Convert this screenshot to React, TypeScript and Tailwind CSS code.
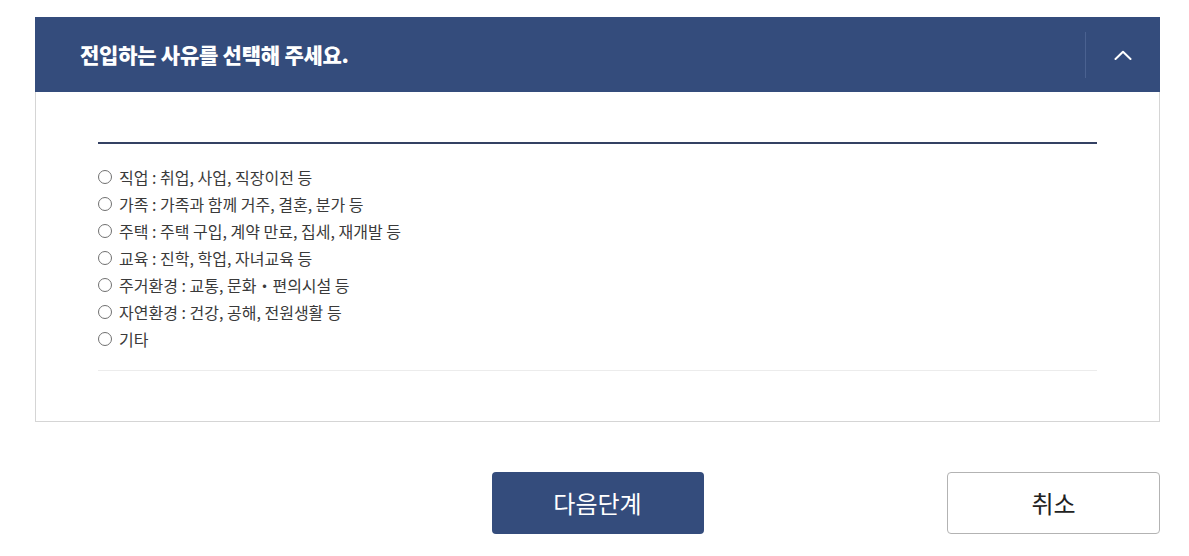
import React from "react";

const items = [
  "직업 : 취업, 사업, 직장이전 등",
  "가족 : 가족과 함께 거주, 결혼, 분가 등",
  "주택 : 주택 구입, 계약 만료, 집세, 재개발 등",
  "교육 : 진학, 학업, 자녀교육 등",
  "주거환경 : 교통, 문화・편의시설 등",
  "자연환경 : 건강, 공해, 전원생활 등",
  "기타",
];

export default function App() {
  return (
    <div
      className="w-[1189px] h-[556px] bg-white overflow-hidden"
      style={{ fontFamily: '"Noto Sans CJK KR", "Noto Sans", sans-serif' }}
    >
      <div className="ml-[35px] w-[1125px] pt-[17px]">
        <div className="border border-[#d5d5d5]">
          <div className="-mx-px -mt-px h-[75px] bg-[#344c7c] flex items-center justify-between">
            <h2 className="pl-[45px] text-white text-[21px] font-black tracking-[-0.25px]">
              전입하는 사유를 선택해 주세요.
            </h2>
            <div className="flex items-center h-full">
              <div className="w-px h-[46px] bg-[#4a6190]" />
              <button className="w-[74px] h-full flex items-center justify-center">
                <svg width="18" height="10" viewBox="0 0 18 10" fill="none">
                  <path d="M1.5 9L9 1.8L16.5 9" stroke="white" strokeWidth="2" strokeLinecap="round" strokeLinejoin="round" />
                </svg>
              </button>
            </div>
          </div>
          <div className="px-[62px] pt-[50px] pb-[50px]">
            <div className="h-[2px] bg-[#344163]" />
            <ul className="pt-[19px] pb-[18px] border-b border-[#ececec]">
              {items.map((t) => (
                <li key={t} className="flex items-center h-[27px] text-[16px] text-[#3a3a3a]">
                  <span className="w-[14px] h-[14px] rounded-full border border-[#707070] bg-white shrink-0" />
                  <span className="ml-[7px]">{t}</span>
                </li>
              ))}
            </ul>
          </div>
        </div>
        <div className="grid grid-cols-[1fr_212px_1fr] mt-[50px]">
          <div />
          <button className="h-[62px] rounded-[4px] bg-[#344c7c] text-white text-[24px]">
            다음단계
          </button>
          <div className="flex justify-end">
            <button className="w-[213px] h-[62px] rounded-[4px] border border-[#b3b3b3] bg-white text-[#222] text-[24px]">
              취소
            </button>
          </div>
        </div>
      </div>
    </div>
  );
}
